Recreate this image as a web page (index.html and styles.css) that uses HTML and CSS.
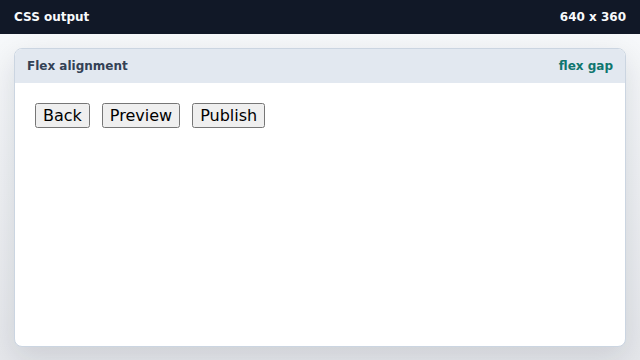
FILE: index.html
```html
<!DOCTYPE html>
<html>
<head>
    <meta name="viewport" content="width=device-width, initial-scale=1.0">
    <link rel="stylesheet" href="styles.css">
</head>
<body>
    <div class="topbar">
        <span>CSS output</span>
        <span>640 x 360</span>
    </div>
    <div class="stage">
        <div class="card">
            <div class="card-head">
                <span class="title">Flex alignment</span>
                <span class="tag">flex gap</span>
            </div>
            <div class="card-body">
                <div class="toolbar">
                    <button>Back</button>
                    <button>Preview</button>
                    <button>Publish</button>
                </div>
            </div>
        </div>
    </div>
</body>
</html>
```

FILE: styles.css
```css
* {
    margin: 0;
    box-sizing: border-box;
}

html, body {
    height: 100%;
}

body {
    display: flex;
    flex-direction: column;
    background: linear-gradient(#f8fafc, #e5e7eb);
    font-family: "DejaVu Sans", sans-serif;
}

.topbar {
    height: 34px;
    flex: none;
    display: flex;
    justify-content: space-between;
    align-items: center;
    padding: 0 14px;
    background: #111827;
    color: #f8fafc;
    font-size: 12px;
    font-weight: bold;
}

.stage {
    flex: 1;
    display: flex;
    padding: 14px 14px 13px;
}

.card {
    flex: 1;
    display: flex;
    flex-direction: column;
    background: #fff;
    border: 1px solid #cbd5e1;
    border-radius: 8px;
    overflow: hidden;
    box-shadow: 0 10px 30px rgba(15, 23, 42, 0.12);
}

.card-head {
    height: 34px;
    flex: none;
    display: flex;
    justify-content: space-between;
    align-items: center;
    padding: 0 12px;
    background: #e2e8f0;
    font-size: 12px;
    font-weight: bold;
}

.title {
    color: #334155;
}

.tag {
    color: #0f766e;
}

.card-body {
    flex: 1;
    padding: 20px;
}

.toolbar {
    display: flex;
    gap: 12px;
}

.toolbar button {
    font-family: "DejaVu Sans", sans-serif;
    font-size: 16px;
    color: #000;
    padding: 1px 6px;
}
```
